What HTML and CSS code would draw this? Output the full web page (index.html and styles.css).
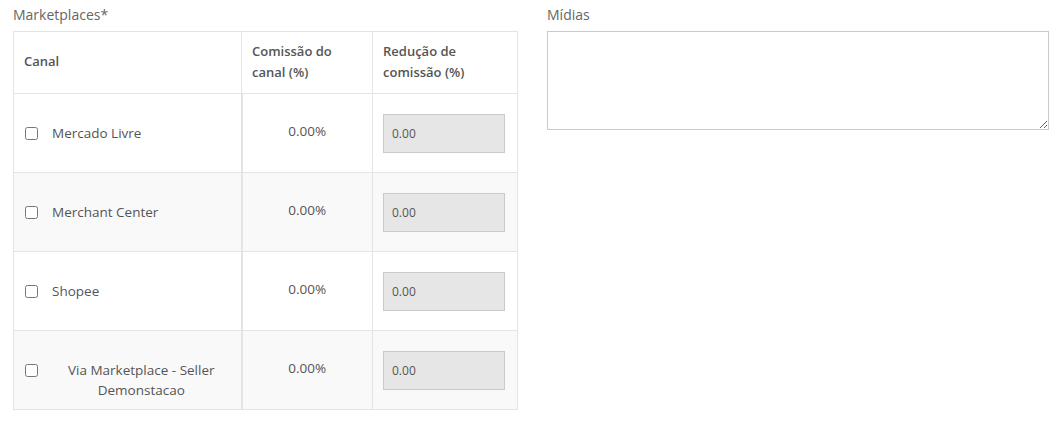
FILE: index.html
```html
<!DOCTYPE html>
<html lang="pt-BR">
<head>
<meta charset="utf-8">
<title>Marketplaces</title>
<link rel="stylesheet" href="styles.css">
</head>
<body>
<div class="page">
  <div class="col col-left">
    <label class="field-label">Marketplaces*</label>
    <table class="mp-table">
      <colgroup>
        <col class="w-canal">
        <col class="w-com">
        <col class="w-red">
      </colgroup>
      <thead>
        <tr>
          <th class="c-canal">Canal</th>
          <th class="c-com">Comissão do canal (%)</th>
          <th class="c-red">Redução de comissão (%)</th>
        </tr>
      </thead>
      <tbody>
        <tr>
          <td class="c-canal"><div class="canal"><input type="checkbox"><span class="canal-name">Mercado Livre</span></div></td>
          <td class="c-com">0.00%</td>
          <td class="c-red"><input class="red-input" type="text" value="0.00" readonly></td>
        </tr>
        <tr class="odd">
          <td class="c-canal"><div class="canal"><input type="checkbox"><span class="canal-name">Merchant Center</span></div></td>
          <td class="c-com">0.00%</td>
          <td class="c-red"><input class="red-input" type="text" value="0.00" readonly></td>
        </tr>
        <tr>
          <td class="c-canal"><div class="canal"><input type="checkbox"><span class="canal-name">Shopee</span></div></td>
          <td class="c-com">0.00%</td>
          <td class="c-red"><input class="red-input" type="text" value="0.00" readonly></td>
        </tr>
        <tr class="odd">
          <td class="c-canal"><div class="canal"><input type="checkbox"><span class="canal-name">Via Marketplace - Seller Demonstacao</span></div></td>
          <td class="c-com">0.00%</td>
          <td class="c-red"><input class="red-input" type="text" value="0.00" readonly></td>
        </tr>
      </tbody>
    </table>
  </div>
  <div class="col col-right">
    <label class="field-label">Mídias</label>
    <textarea class="midias"></textarea>
  </div>
</div>
</body>
</html>
```

FILE: styles.css
```css
html, body {
  margin: 0;
  padding: 0;
  background: #fff;
}
body {
  font-family: "Open Sans", "Noto Sans", sans-serif;
  font-size: 13.5px;
  color: #555;
}
.page {
  display: grid;
  grid-template-columns: 504px 502px;
  column-gap: 30px;
  padding: 5px 0 0 13px;
}
.col {
  display: flex;
  flex-direction: column;
}
.field-label {
  font-size: 14px;
  line-height: 20px;
  color: #666;
  margin-bottom: 6px;
}
.mp-table {
  border-collapse: collapse;
  width: 504px;
  table-layout: fixed;
}
.w-canal { width: 228px; }
.w-com { width: 131px; }
.w-red { width: 145px; }
.mp-table th,
.mp-table td {
  box-sizing: border-box;
  border: 1px solid #e4e4e4;
  padding: 0 10px;
}
.mp-table th {
  height: 62px;
  text-align: left;
  font-weight: 600;
  font-size: 13px;
  line-height: 21px;
  vertical-align: middle;
  padding-bottom: 2px;
}
.mp-table td {
  height: 79px;
  vertical-align: middle;
}
.mp-table td.c-canal {
  border-right: 2px solid #e4e4e4;
  vertical-align: top;
  padding-top: 29px;
}
.mp-table tr.odd td { background: #f9f9f9; }
.canal {
  display: flex;
  align-items: flex-start;
}
.canal input {
  margin: 4px 14px 0 1px;
  width: 13px;
  height: 13px;
  flex: none;
}
.canal-name {
  text-align: center;
  line-height: 20px;
}
.mp-table td.c-com {
  text-align: center;
  vertical-align: top;
  padding-top: 27px;
  line-height: 20px;
}
.red-input {
  box-sizing: border-box;
  width: 122px;
  height: 39px;
  background: #e6e6e6;
  border: 1px solid #cacaca;
  padding: 0 8px;
  font-family: "Open Sans", "Noto Sans", sans-serif;
  font-size: 12px;
  color: #555;
  outline: none;
  display: block;
}
.midias {
  box-sizing: border-box;
  width: 502px;
  height: 99px;
  border: 1px solid #cacaca;
  margin: 0;
  padding: 6px;
  font-family: "Open Sans", sans-serif;
  resize: vertical;
}
```
